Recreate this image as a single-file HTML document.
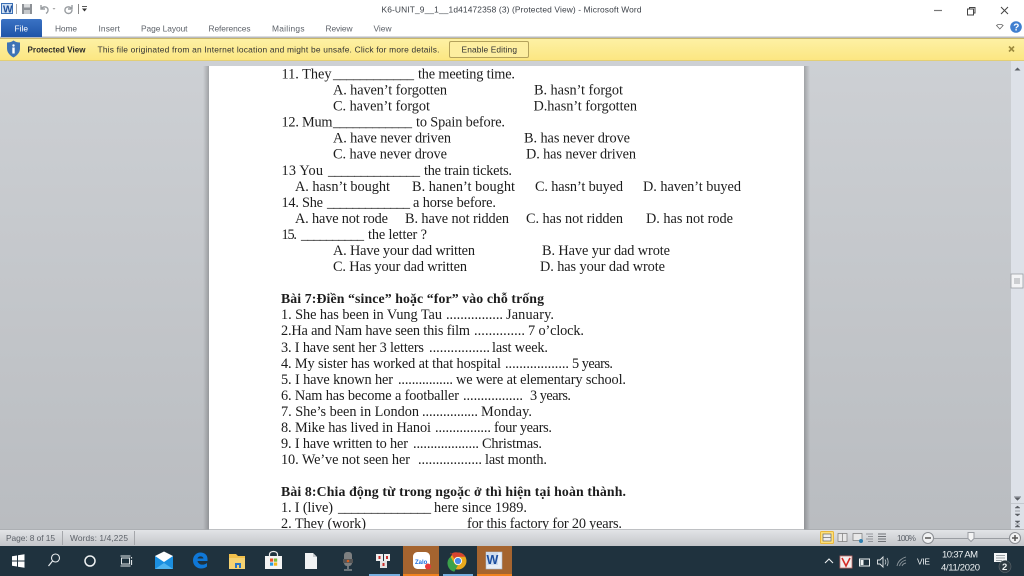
<!DOCTYPE html>
<html><head><meta charset="utf-8"><style>
html,body{margin:0;padding:0;width:1024px;height:576px;overflow:hidden;background:#c5c8cc}
svg{display:block}
.d text{font-family:"Liberation Serif",serif;font-size:14.300px;fill:#1c1c1c}
.d{filter:blur(.35px)}
.d .b{font-weight:bold;font-size:13.800px}
.u text,.u{font-family:"Liberation Sans",sans-serif;font-size:8.400px}
.u{filter:blur(.2px)}
</style></head><body>
<svg width="1024" height="576" viewBox="0 0 1024 576" xmlns="http://www.w3.org/2000/svg">
<defs>
<linearGradient id="bg" x1="0" y1="0" x2="0" y2="1"><stop offset="0" stop-color="#cdd0d4"/><stop offset="1" stop-color="#b9bcc0"/></linearGradient>
<linearGradient id="yl" x1="0" y1="0" x2="0" y2="1"><stop offset="0" stop-color="#fdf1a6"/><stop offset="1" stop-color="#fce680"/></linearGradient>
<linearGradient id="st" x1="0" y1="0" x2="0" y2="1"><stop offset="0" stop-color="#e2e4e7"/><stop offset="1" stop-color="#c3c5c9"/></linearGradient>
<linearGradient id="fl" x1="0" y1="0" x2="0" y2="1"><stop offset="0" stop-color="#3a72c4"/><stop offset="1" stop-color="#1f55a8"/></linearGradient>
<linearGradient id="sl" x1="0" y1="0" x2="1" y2="0"><stop offset="0" stop-color="#000" stop-opacity="0"/><stop offset="1" stop-color="#000" stop-opacity=".22"/></linearGradient>
<linearGradient id="sr" x1="0" y1="0" x2="1" y2="0"><stop offset="0" stop-color="#000" stop-opacity=".22"/><stop offset="1" stop-color="#000" stop-opacity="0"/></linearGradient>
</defs>
<!-- chrome -->
<rect width="1024" height="38" fill="#fff"/>
<rect y="36.500" width="1024" height="1.500" fill="#b9bbbd"/>
<rect y="38" width="1024" height="23" fill="url(#yl)"/>
<rect y="38" width="1024" height="1" fill="#c8b66a"/>
<rect y="60.500" width="1024" height="1" fill="#c8b66a"/>
<!-- workspace -->
<rect y="61" width="1024" height="469" fill="url(#bg)"/>
<rect x="1011" y="61" width="13" height="469" fill="#dde1e8"/>
<rect x="1011" y="274" width="12" height="14" fill="#f3f4f6" stroke="#9a9ea4" stroke-width=".8"/>
<path d="M1014 279h6M1014 281h6M1014 283h6" stroke="#8a8e94" stroke-width=".8"/>
<path d="M1014.500 70.500l3-3 3 3z" fill="#5a5e64"/>
<path d="M1014 496.500h7M1014.500 497.500l3 3 3-3z" fill="#5a5e64" stroke="#5a5e64" stroke-width=".4"/>
<path d="M1011 503.500h13" stroke="#c5c9cf"/>
<path d="M1015 508l2.500-2 2.500 2zM1015 511h5M1015 514l2.500 2 2.500-2z" fill="#5a5e64" stroke="#5a5e64" stroke-width=".5"/>
<path d="M1015 521l2.500 2 2.500-2zM1015 524h5M1015 527l2.500-2 2.500 2z" fill="#5a5e64" stroke="#5a5e64" stroke-width=".5"/>
<!-- page -->
<rect x="203" y="66" width="6" height="464" fill="url(#sl)"/>
<rect x="804" y="66" width="6" height="464" fill="url(#sr)"/>
<rect x="209" y="66" width="595" height="464" fill="#fff"/>
<g class="d">
<text x="281.500" y="78.500" textLength="50" lengthAdjust="spacing">11. They</text><text x="333" y="78.500" textLength="81">____________</text><text x="418" y="78.500" textLength="97">the meeting time.</text>
<text x="333" y="94.500" textLength="114">A. haven’t forgotten</text><text x="534" y="94.500" textLength="89">B. hasn’t forgot</text>
<text x="333" y="110.500" textLength="97">C. haven’t forgot</text><text x="533.500" y="110.500" textLength="103.500">D.hasn’t forgotten</text>
<text x="281.500" y="126.500" textLength="51">12. Mum</text><text x="333" y="126.500" textLength="79">____________</text><text x="416" y="126.500" textLength="89">to Spain before.</text>
<text x="333" y="142.500" textLength="118">A. have never driven</text><text x="524" y="142.500" textLength="106">B. has never drove</text>
<text x="333" y="158.500" textLength="114">C. have never drove</text><text x="526" y="158.500" textLength="110">D. has never driven</text>
<text x="281.500" y="175" textLength="41.500">13 You</text><text x="328" y="175" textLength="92">______________</text><text x="424" y="175" textLength="88">the train tickets.</text>
<text x="295" y="191" textLength="95">A. hasn’t bought</text><text x="412" y="191" textLength="103">B. hanen’t bought</text><text x="535" y="191" textLength="88">C. hasn’t buyed</text><text x="643" y="191" textLength="98">D. haven’t buyed</text>
<text x="281.500" y="207" textLength="41.500">14. She</text><text x="327" y="207" textLength="83">_____________</text><text x="413" y="207" textLength="83">a horse before.</text>
<text x="295" y="223" textLength="93">A. have not rode</text><text x="405" y="223" textLength="104">B. have not ridden</text><text x="526" y="223" textLength="97">C. has not ridden</text><text x="646" y="223" textLength="87">D. has not rode</text>
<text x="281.500" y="239" textLength="15.500">15.</text><text x="301" y="239" textLength="63">__________</text><text x="368" y="239" textLength="59">the letter ?</text>
<text x="333" y="255" textLength="142">A. Have your dad written</text><text x="542" y="255" textLength="128">B. Have yur dad wrote</text>
<text x="333" y="271" textLength="134">C. Has your dad written</text><text x="540" y="271" textLength="125">D. has your dad wrote</text>
<text class="b" x="281" y="303" textLength="263">Bài 7:Điền “since” hoặc “for” vào chỗ trống</text>
<text x="281" y="319" textLength="161">1. She has been in Vung Tau</text><text x="446" y="319" textLength="57">................</text><text x="506" y="319" textLength="48">January.</text>
<text x="281" y="335" textLength="189">2.Ha and Nam have seen this film</text><text x="474" y="335" textLength="51">..............</text><text x="528" y="335" textLength="56">7 o’clock.</text>
<text x="281" y="352" textLength="143">3. I have sent her 3 letters</text><text x="429" y="352" textLength="61">.................</text><text x="492" y="352" textLength="56">last week.</text>
<text x="281" y="368" textLength="220">4. My sister has worked at that hospital</text><text x="505" y="368" textLength="64">..................</text><text x="572" y="368" textLength="41">5 years.</text>
<text x="281" y="384" textLength="112">5. I have known her</text><text x="398" y="384" textLength="55">................</text><text x="456" y="384" textLength="170">we were at elementary school.</text>
<text x="281" y="400" textLength="178">6. Nam has become a footballer</text><text x="463" y="400" textLength="60">.................</text><text x="530" y="400" textLength="41">3 years.</text>
<text x="281" y="416" textLength="138">7. She’s been in London</text><text x="422" y="416" textLength="56">................</text><text x="481" y="416" textLength="51">Monday.</text>
<text x="281" y="432" textLength="150">8. Mike has lived in Hanoi</text><text x="435" y="432" textLength="56">................</text><text x="494" y="432" textLength="58">four years.</text>
<text x="281" y="448" textLength="127">9. I have written to her</text><text x="413" y="448" textLength="66">...................</text><text x="482" y="448" textLength="60">Christmas.</text>
<text x="281" y="464" textLength="129">10. We’ve not seen her</text><text x="418" y="464" textLength="64">..................</text><text x="485" y="464" textLength="62">last month.</text>
<text class="b" x="281" y="496" textLength="345">Bài 8:Chia động từ trong ngoặc ở thì hiện tại hoàn thành.</text>
<text x="281" y="512" textLength="52">1. I (live)</text><text x="338" y="512" textLength="93">______________</text><text x="434" y="512" textLength="93">here since 1989.</text>
<text x="281" y="528" textLength="85">2. They (work)</text><text x="467" y="528" textLength="155">for this factory for 20 years.</text>
</g>
<rect y="530" width="1024" height="16" fill="url(#st)"/>
<path d="M0 529.500h1024" stroke="#a9abaf" stroke-width=".8"/>
<!-- QAT -->
<rect x="1.500" y="3.500" width="11" height="10" fill="#cfe0f3" stroke="#3a6fb5"/>
<text x="3" y="12.500" font-family="Liberation Sans" font-weight="bold" font-size="10" fill="#1f4f9a">W</text>
<path d="M16.500 4v10" stroke="#a8a8a8"/>
<rect x="22" y="4" width="10" height="10" fill="#8d9196"/><rect x="24" y="4" width="6" height="3.500" fill="#d9dbdd"/><rect x="24" y="10" width="6" height="4" fill="#c6c8cb"/>
<path d="M41 5v4h4M41.500 8.500c2-2.500 6-2 6.500 1 .2 1.500-.5 3-2 4" fill="none" stroke="#9a9ea2" stroke-width="1.400"/>
<path d="M52.500 8l1.500 1.700 1.500-1.700z" fill="#a5a5a5"/>
<path d="M72 5v4h-4M71.500 8.500c-2-2.500-6-2-6.500 1-.4 2.500 1.500 4 3.500 4s3.500-1.500 3.500-3.500" fill="none" stroke="#9a9ea2" stroke-width="1.400"/>
<path d="M78.500 4v10" stroke="#888"/>
<path d="M82 6.500h5" stroke="#333" stroke-width=".8"/><path d="M82 8.500h5l-2.500 3z" fill="#333"/>
<!-- File tab -->
<path d="M1 37v-16q0-2 2-2h37q2 0 2 2v16z" fill="url(#fl)"/>
<!-- window buttons -->
<path d="M934 10.500h8" stroke="#777" stroke-width="1.200"/>
<rect x="967.500" y="9" width="6" height="6" fill="#fff" stroke="#444"/><path d="M969.500 9v-1.500h5.500v5.500h-1.500" fill="none" stroke="#444"/>
<path d="M1001 7l7 7M1008 7l-7 7" stroke="#444" stroke-width="1"/>
<path d="M996.500 25.500l3.300 3.500 3.300-3.500-1.500-1h-3.600z" fill="#fff" stroke="#666" stroke-width=".8"/>
<circle cx="1016" cy="27" r="5.800" fill="#3f7fd0"/><text x="1013.300" y="30.500" font-family="Liberation Sans" font-weight="bold" font-size="10" fill="#fff">?</text>
<!-- shield -->
<path d="M13.500 40.500c2 1.500 4.500 2 6.500 2v6c0 4-3 7-6.500 9-3.500-2-6.500-5-6.500-9v-6c2 0 4.500-.5 6.500-2z" fill="#3e73b5"/>
<circle cx="13.500" cy="45.500" r="1.200" fill="#fff"/><rect x="12.300" y="47.500" width="2.400" height="6" fill="#fff"/>
<!-- enable button -->
<rect x="449.500" y="41.500" width="79" height="16" rx="1.500" fill="#fdeea0" stroke="#b4a25c"/>
<path d="M1009 46.500l5 5M1014 46.500l-5 5" stroke="#9c8a3e" stroke-width="1.600"/>
<!-- status bar -->
<path d="M62.500 531v14M134.500 531v14" stroke="#a5a7ab"/>
<rect x="820.500" y="531.500" width="13" height="12" rx="1" fill="#fde07a" stroke="#e9b73a"/>
<rect x="823" y="534" width="8" height="7" fill="#eee" stroke="#666" stroke-width=".7"/><path d="M823 537.500h8" stroke="#666" stroke-width=".7"/>
<rect x="838" y="533.500" width="9" height="8" fill="#e8e8e8" stroke="#777" stroke-width=".7"/><path d="M842.500 533.500v8" stroke="#777" stroke-width=".7"/>
<rect x="853" y="533.500" width="9" height="7" fill="#e8e8e8" stroke="#777" stroke-width=".7"/><circle cx="861" cy="541" r="2" fill="#2f7fb0"/>
<path d="M866 534h7M868 536.500h5M866 539h7M868 541.500h5" stroke="#808388" stroke-width=".8"/>
<path d="M878 534h8M878 536.500h8M878 539h8M878 541.500h8" stroke="#6f7277" stroke-width="1"/>
<circle cx="928" cy="538" r="5.500" fill="#f1f2f3" stroke="#8a8d92"/><path d="M925 538h6" stroke="#555" stroke-width="1.500"/>
<path d="M934 538.500h75" stroke="#9a9da2"/>
<path d="M968 532.500h6v6l-3 3-3-3z" fill="#f4f4f4" stroke="#9a9da2"/>
<circle cx="1015" cy="538" r="5.500" fill="#f1f2f3" stroke="#8a8d92"/><path d="M1012 538h6M1015 535v6" stroke="#555" stroke-width="1.500"/>
<!-- taskbar -->
<rect y="546" width="1024" height="30" fill="#1f323e"/>
<rect x="403" y="546" width="36" height="30" fill="#a5642f"/>
<rect x="477" y="546" width="35" height="30" fill="#a5642f"/>
<rect x="369" y="574" width="31" height="2" fill="#76aede"/>
<rect x="403" y="574" width="36" height="2" fill="#f0821e"/>
<rect x="443" y="574" width="30" height="2" fill="#76aede"/>
<rect x="477" y="574" width="35" height="2" fill="#f0821e"/>
<!-- all UI text -->
<g class="u">
<text x="14.500" y="31.500" fill="#fff" textLength="13.500">File</text>
<g fill="#5d6269">
<text x="55" y="31.500" textLength="22">Home</text>
<text x="98.500" y="31.500" textLength="21.500">Insert</text>
<text x="141" y="31.500" textLength="46.500">Page Layout</text>
<text x="208.500" y="31.500" textLength="42">References</text>
<text x="272" y="31.500" textLength="32.500">Mailings</text>
<text x="325.500" y="31.500" textLength="27">Review</text>
<text x="373.500" y="31.500" textLength="18">View</text>
</g>
<text x="381.500" y="12.500" fill="#3a3f46" textLength="260">K6-UNIT_9__1__1d41472358 (3) (Protected View)  -  Microsoft Word</text>
<text x="27.500" y="52.500" fill="#2a2a2a" font-weight="bold" style="font-size:8px" textLength="58">Protected View</text>
<text x="97.500" y="52.500" fill="#333" textLength="342">This file originated from an Internet location and might be unsafe. Click for more details.</text>
<text x="461.500" y="52.500" fill="#333" textLength="55.500">Enable Editing</text>
<text x="6" y="541" fill="#5d6269" textLength="49">Page: 8 of 15</text>
<text x="70" y="541" fill="#5d6269" textLength="58">Words: 1/4,225</text>
<text x="897" y="541" fill="#5d6269" textLength="19">100%</text>
<text x="917" y="564.500" fill="#eef2f4" textLength="13">VIE</text>
<text x="942" y="557.500" fill="#eef2f4" textLength="36" style="font-size:9.500px">10:37 AM</text>
<text x="941" y="570.500" fill="#eef2f4" textLength="39" style="font-size:9.500px">4/11/2020</text>
</g>
<!-- win -->
<path d="M12 556.200l5-.7v5h-5zM18 555.300l6.500-1v6.200h-6.500zM12 561.500h5v5l-5-.7zM18 561.500h6.500v6.200l-6.500-1z" fill="#fff"/>
<!-- search -->
<circle cx="55.500" cy="558" r="4" fill="none" stroke="#e8ecee" stroke-width="1.100"/><path d="M52.500 561l-4 5" stroke="#e8ecee" stroke-width="1.200"/>
<circle cx="90" cy="561" r="5" fill="none" stroke="#eef1f2" stroke-width="1.500"/>
<!-- taskview -->
<path d="M120.500 556h10M120.500 566h10" stroke="#dfe4e6"/><rect x="121.500" y="558" width="8" height="6" fill="none" stroke="#dfe4e6"/><path d="M131.500 557v1.500M131.500 560v5" stroke="#dfe4e6" stroke-width="1.200"/>
<!-- mail -->
<rect x="155" y="556" width="18" height="13" fill="#1b8fe0"/><path d="M155 556l9-4.500 9 4.500-9 6z" fill="#fff"/><path d="M155 569l9-6 9 6z" fill="#4fb4f0"/>
<!-- edge -->
<path d="M200.500 552.500c-4.500 0-7.500 3.500-7.500 8 0 5 4 8 8 8 2.500 0 4.500-.7 6-2v-3.500c-3 2.500-8.500 2.500-9.500-2h10v-2c0-4-3-6.500-7-6.500zm-3 6c.5-2.500 5.500-3 6 0z" fill="#0f78d8" fill-rule="evenodd"/>
<!-- explorer -->
<path d="M229 554h7l2 2h7v13h-16z" fill="#f2c04c"/><rect x="229" y="558" width="16" height="11" fill="#f5d272"/><rect x="235" y="563" width="6" height="5" fill="#2a74c4"/><rect x="237" y="565" width="2" height="3" fill="#f5d272"/>
<!-- store -->
<path d="M269.500 556v-1.500c0-4 8-4 8 0v1.500" fill="none" stroke="#eee" stroke-width="1.200"/><rect x="265" y="556" width="17" height="13" fill="#f4f4f4"/><rect x="270" y="558.500" width="3.200" height="3.200" fill="#e8542a"/><rect x="274" y="558.500" width="3.200" height="3.200" fill="#7db93a"/><rect x="270" y="562.500" width="3.200" height="3.200" fill="#2a9ae0"/><rect x="274" y="562.500" width="3.200" height="3.200" fill="#f2b81c"/>
<!-- file -->
<path d="M305 553h8l4 4v12h-12z" fill="#f1f3f4"/><path d="M313 553v4h4z" fill="#c8ccd0"/>
<!-- mic -->
<rect x="344" y="552" width="8" height="14" rx="3" fill="#7d7f80"/><rect x="343" y="559" width="10" height="4" fill="#555"/><circle cx="348" cy="561" r="1.300" fill="#d86020"/><path d="M348 566v3M344 570h8" stroke="#9a9c9d" stroke-width="1.300"/>
<!-- unikey -->
<rect x="376" y="554" width="7" height="7" fill="#eee"/><rect x="384" y="554" width="6" height="7" fill="#eee"/><rect x="380" y="561" width="7" height="7" fill="#e2e2e2"/><rect x="378.500" y="556" width="2" height="3" fill="#c9302c"/><rect x="386" y="556" width="2" height="3" fill="#c9302c"/><rect x="382.500" y="563" width="2" height="3" fill="#c9302c"/>
<!-- zalo -->
<rect x="413" y="552" width="17" height="17" rx="4.500" fill="#fff"/>
<text x="415" y="564" font-family="Liberation Sans" font-weight="bold" font-size="6" fill="#1e6fe0">Zalo</text>
<circle cx="428" cy="566.500" r="3" fill="#e93a3a"/>
<!-- chrome icon -->
<circle cx="458" cy="561" r="8.500" fill="#e8a91c"/>
<path d="M458 552.500a8.500 8.500 0 0 1 7.400 4.250h-7.400a4.250 4.250 0 0 0-3.700 2.100l-3.700-6.400 0 2a8.500 8.500 0 0 1 7.400-2z" fill="#d8442f"/>
<path d="M450.600 556.800l3.700 6.400a4.250 4.250 0 0 0 3.700 2.100l-3.700 6.400a8.500 8.500 0 0 1-3.700-14.900z" fill="#3ba24a"/>
<circle cx="458" cy="561" r="3.600" fill="#4a8ae8" stroke="#fff" stroke-width=".9"/>
<!-- word -->
<rect x="486" y="552" width="16" height="17" fill="#e9eef6" stroke="#a9b8cd" stroke-width=".6"/>
<rect x="486" y="552" width="12" height="13" fill="#cfdcee"/>
<text x="486.500" y="564" font-family="Liberation Sans" font-weight="bold" font-size="12.500" fill="#1c4ea0">W</text>
<!-- tray -->
<path d="M825 563l4-4 4 4" fill="none" stroke="#eef1f2" stroke-width="1.100"/>
<rect x="840" y="556" width="12" height="12" fill="#f3eeee" stroke="#c7706a" stroke-width=".8"/><path d="M842 558l4 8 4-8" fill="none" stroke="#d62b25" stroke-width="1.600"/>
<rect x="859.500" y="559" width="10" height="7" fill="none" stroke="#eef1f2"/><rect x="860.500" y="560" width="3" height="5" fill="#eef1f2"/>
<path d="M877.500 560h2.500l3-3v10l-3-3h-2.500z" fill="none" stroke="#e3e7e9" stroke-width=".9"/><path d="M885 559.500c1 1.500 1 3.500 0 5M887 558c1.500 2 1.500 6 0 8" fill="none" stroke="#c5ccd0" stroke-width=".8"/>
<path d="M897 566c1-5 5-8 9-9M899.500 566c.7-3 3-5 6.500-6M902 566c.5-1.500 1.500-2.500 4-3" fill="none" stroke="#8d979d" stroke-width=".9"/>
<path d="M994 553h13v9h-9l-4 0z" fill="#f4f6f7"/><path d="M996 555.500h9M996 558h9M996 560.500h6" stroke="#7c868c" stroke-width=".8"/>
<circle cx="1005" cy="566.500" r="6" fill="#2e3a42" stroke="#5b666d" stroke-width=".6"/>
<text x="1002" y="570" font-family="Liberation Sans" font-weight="bold" font-size="9.500" fill="#eef1f2">2</text>
</svg>
</body></html>
